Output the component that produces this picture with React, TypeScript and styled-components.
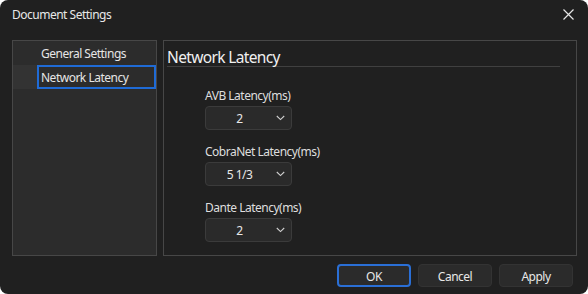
import React from 'react';
import styled, { createGlobalStyle } from 'styled-components';

const GlobalStyle = createGlobalStyle`
  html, body {
    margin: 0;
    padding: 0;
    background: #ffffff;
  }
  body {
    font-family: "Noto Sans", "Open Sans", sans-serif;
    font-size: 12px;
    letter-spacing: -0.5px;
  }
`

const Dialog = styled.div`
  width: 588px;
  height: 294px;
  background: #202020;
  border-radius: 8px;
  display: flex;
  flex-direction: column;
  color: #e4e4e4;
  overflow: hidden;
`
const TitleBar = styled.div`
  height: 28px;
  display: flex;
  align-items: center;
  justify-content: space-between;
  padding: 0 14px 0 12px;
`
const Title = styled.span`
  color: #e8e8e8;
  padding-top: 1px;
`
const CloseButton = styled.div`
  width: 12px;
  height: 12px;
  display: flex;
  align-items: center;
  justify-content: center;
`
const Body = styled.div`
  display: flex;
  gap: 6px;
  padding: 12px 11px 0 12px;
  height: 216px;
`
const NavPanel = styled.div`
  width: 145px;
  box-sizing: border-box;
  background: #2c2c2c;
  border: 1px solid #474747;
  display: flex;
  flex-direction: column;
`
const NavRow = styled.div<{ $selected?: boolean }>`
  height: 24px;
  display: flex;
  background: ${p => (p.$selected ? '#333333' : 'transparent')};
`
const NavItem = styled.div<{ $selected?: boolean }>`
  margin-left: 24px;
  flex: 1;
  box-sizing: border-box;
  border: 2px solid ${p => (p.$selected ? '#1f6bd6' : 'transparent')};
  background: ${p => (p.$selected ? '#2c2c2c' : 'transparent')};
  padding: 1px 0 0 2px;
  display: flex;
  align-items: center;
  color: #e6e6e6;
`
const ContentPanel = styled.div`
  flex: 1;
  box-sizing: border-box;
  border: 1px solid #474747;
  padding: 4px 16px 0 3px;
`
const Heading = styled.div`
  font-size: 15.5px;
  letter-spacing: -0.65px;
  line-height: 20px;
  padding-top: 2px;
  color: #f0f0f0;
  border-bottom: 1px solid #404040;
  height: 22px;
  box-sizing: border-box;
`
const Fields = styled.div`
  padding: 19px 0 0 38px;
  display: flex;
  flex-direction: column;
  gap: 12px;
`
const Field = styled.div`
  display: flex;
  flex-direction: column;
  gap: 4px;
`
const Label = styled.span`
  line-height: 16px;
  padding-top: 2px;
  height: 16px;
  box-sizing: border-box;
  color: #dedede;
`
const Select = styled.div`
  width: 87px;
  height: 24px;
  box-sizing: border-box;
  background: #2a2a2a;
  border: 1px solid #3b3b3b;
  border-radius: 4px;
  display: flex;
  align-items: center;
`
const Value = styled.span`
  width: 67px;
  text-align: center;
  padding-top: 1px;
  color: #e8e8e8;
`
const Chevron = styled.svg`
  margin-left: 3px;
`
const Footer = styled.div`
  display: flex;
  justify-content: flex-end;
  gap: 7px;
  padding: 8px 15px 0 0;
`
const Button = styled.button<{ $primary?: boolean }>`
  width: 74px;
  height: 23px;
  box-sizing: border-box;
  background: #2b2b2b;
  border: ${p => (p.$primary ? '2px solid #2a6fd6' : '1px solid #333333')};
  border-radius: 4px;
  color: #e8e8e8;
  font-family: inherit;
  font-size: 12px;
  letter-spacing: inherit;
  padding: 1px 0 0;
`

function Dropdown({ value }: { value: string }) {
  return (
    <Select>
      <Value>{value}</Value>
      <Chevron width="9" height="6" viewBox="0 0 9 6">
        <path d="M0.8 1 L4.5 4.6 L8.2 1" fill="none" stroke="#d0d0d0" strokeWidth="1.1" />
      </Chevron>
    </Select>
  );
}

const fields = [
  { label: 'AVB Latency(ms)', value: '2' },
  { label: 'CobraNet Latency(ms)', value: '5 1/3' },
  { label: 'Dante Latency(ms)', value: '2' },
];

export default function App() {
  return (
    <>
      <GlobalStyle />
      <Dialog>
        <TitleBar>
          <Title>Document Settings</Title>
          <CloseButton>
            <svg width="11" height="11" viewBox="0 0 11 11">
              <path d="M0.5 0.5 L10.5 10.5 M10.5 0.5 L0.5 10.5" stroke="#e6e6e6" strokeWidth="1.2" />
            </svg>
          </CloseButton>
        </TitleBar>
        <Body>
          <NavPanel>
            <NavRow>
              <NavItem>General Settings</NavItem>
            </NavRow>
            <NavRow $selected>
              <NavItem $selected>Network Latency</NavItem>
            </NavRow>
          </NavPanel>
          <ContentPanel>
            <Heading>Network Latency</Heading>
            <Fields>
              {fields.map(f => (
                <Field key={f.label}>
                  <Label>{f.label}</Label>
                  <Dropdown value={f.value} />
                </Field>
              ))}
            </Fields>
          </ContentPanel>
        </Body>
        <Footer>
          <Button $primary>OK</Button>
          <Button>Cancel</Button>
          <Button>Apply</Button>
        </Footer>
      </Dialog>
    </>
  );
}
